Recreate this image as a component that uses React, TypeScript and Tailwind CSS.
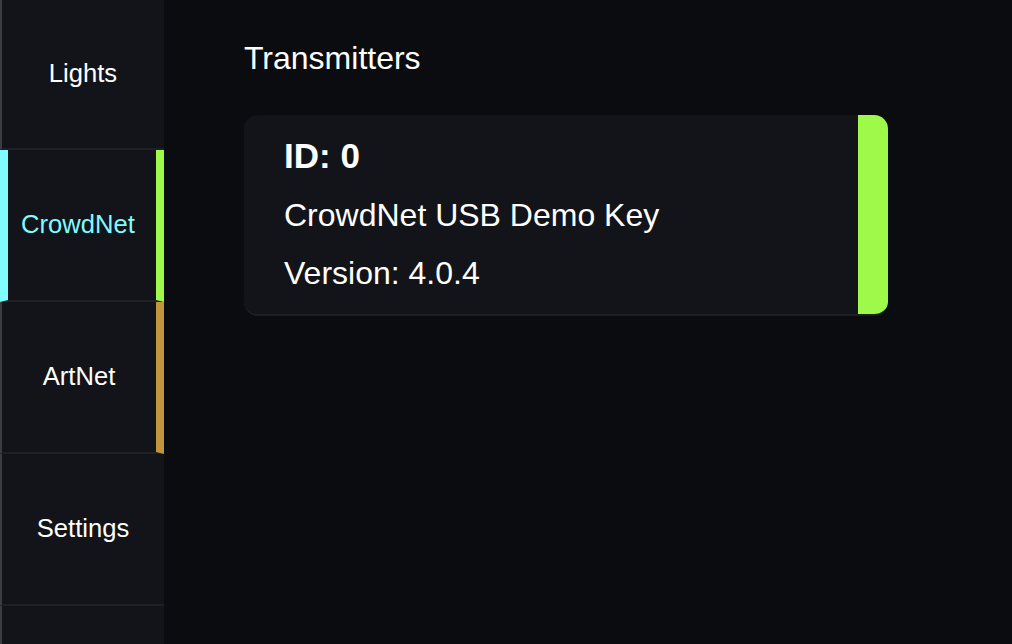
const NAV = [
  { label: 'Lights', active: false, right: '', h: 'h-[150px]' },
  { label: 'CrowdNet', active: true, right: 'green', h: 'h-[152px]' },
  { label: 'ArtNet', active: false, right: 'gold', h: 'h-[152px]' },
  { label: 'Settings', active: false, right: '', h: 'h-[152px]' },
];

function NavItem({ label, active, right, h }: { label: string; active: boolean; right: string; h: string }) {
  const left = active ? 'border-l-8 border-l-[#80fbff] text-[#80fbff]' : 'border-l-2 border-l-[#3b3c41] text-white';
  const r =
    right === 'green'
      ? 'border-r-8 border-r-[#9ef94b] pr-2'
      : right === 'gold'
        ? 'border-r-8 border-r-[#c0953c]'
        : '';
  return (
    <div
      className={`flex ${h} shrink-0 items-center justify-center border-b-2 border-b-[#1f2025] text-[25.6px] leading-none ${left} ${r}`}
    >
      {label}
    </div>
  );
}

export default function App() {
  return (
    <div
      className="flex h-[644px] w-[1012px] overflow-hidden bg-[#0b0c0f] text-white"
      style={{ fontFamily: '"Liberation Sans", Arial, sans-serif' }}
    >
      <aside className="flex w-[164px] shrink-0 flex-col bg-[#131419]">
        {NAV.map((n) => (
          <NavItem key={n.label} {...n} />
        ))}
        <div className="flex-1 border-l-2 border-l-[#3b3c41]" />
      </aside>

      <main className="flex-1 pl-[80px] pt-[38px]">
        <h1 className="text-[32px] leading-[40px]">Transmitters</h1>
        <div className="mt-[37px] flex h-[201px] w-[644px] overflow-hidden rounded-[14px] border-b-2 border-b-[#1e1f25] bg-[#131419]">
          <div className="flex flex-1 flex-col gap-[18px] pl-[40px] pt-[20px]">
            <div className="text-[35px] font-bold leading-[42px]">ID: 0</div>
            <div className="text-[32px] leading-[40px]">CrowdNet USB Demo Key</div>
            <div className="text-[32px] leading-[40px]">Version: 4.0.4</div>
          </div>
          <div className="w-[30px] bg-[#9ef94b]" />
        </div>
      </main>
    </div>
  );
}
